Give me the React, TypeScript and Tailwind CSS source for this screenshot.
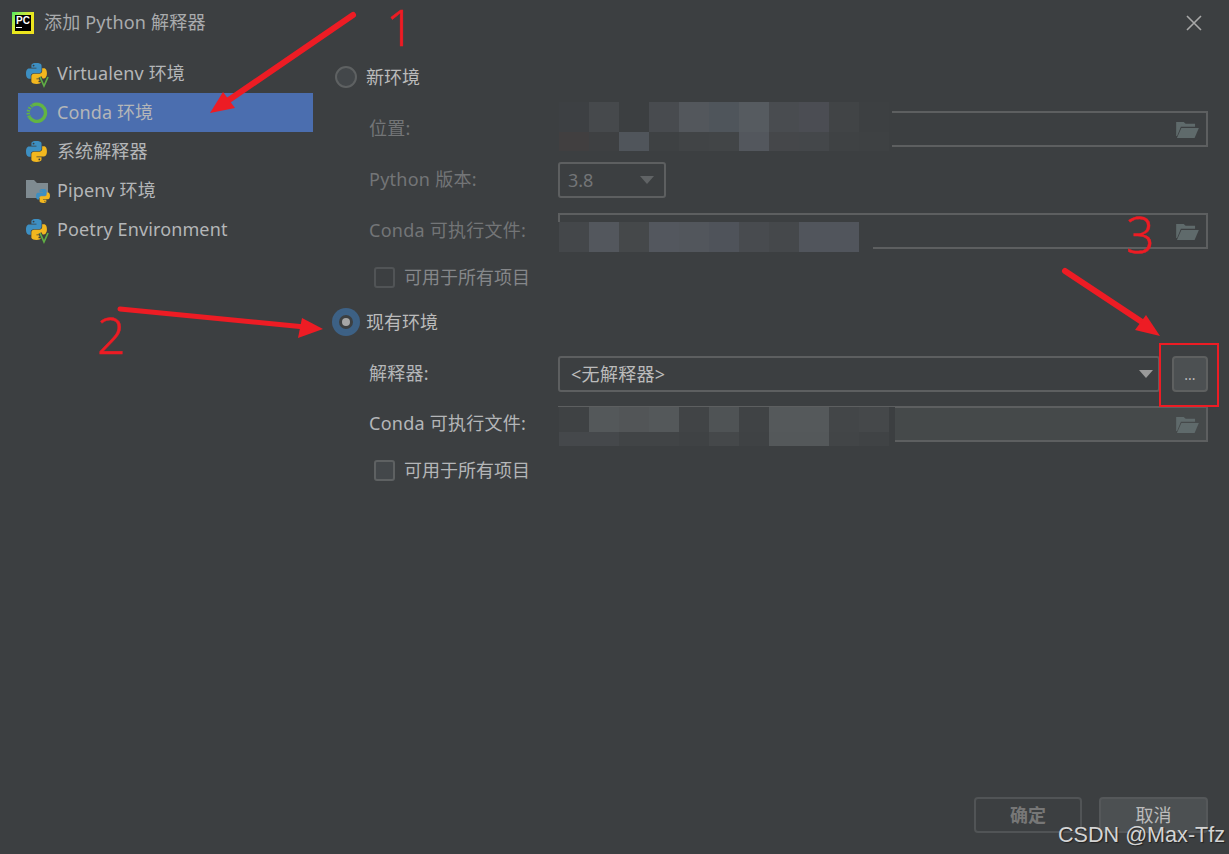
import type { ReactNode } from "react";

const FONT = "font-['Noto_Sans','Noto_Sans_CJK_SC',sans-serif]";

function Python({ className }: { className?: string }) {
  return (
    <svg viewBox="0 0 111 110" className={className}>
      <path
        fill="#3d8fc2"
        fillRule="evenodd"
        d="M54.9 0C26.9 0 28.6 12.1 28.6 12.1l0 12.6h26.7v3.8H18S0 26.4 0 54.8c0 28.3 15.7 27.3 15.7 27.3h9.4V69s-.5-15.7 15.5-15.7h26.6s15 .2 15-14.5V14.5S84.6 0 54.9 0zM40.1 8.5a4.8 4.8 0 1 1 0 9.6 4.8 4.8 0 0 1 0-9.6z"
      />
      <path
        fill="#f2b71f"
        fillRule="evenodd"
        d="M55.7 110c28 0 26.3-12.1 26.3-12.1V85.3H55.3v-3.8h37.3s18 2 18-26.3c0-28.3-15.7-27.3-15.7-27.3h-9.4V41s.5 15.7-15.5 15.7H43.4s-15-.2-15 14.5v24.3S26 110 55.7 110zm14.8-8.5a4.8 4.8 0 1 1 0-9.6 4.8 4.8 0 0 1 0 9.6z"
      />
    </svg>
  );
}

function PythonV() {
  return (
    <div className="relative size-[22px]">
      <Python className="size-[21px]" />
      <svg viewBox="0 0 10 11" className="absolute right-[-1px] bottom-[-2px] h-[11px] w-[10px] overflow-visible">
        <path d="M1 1l4 9 4-9" fill="none" stroke="#3c3f41" strokeWidth="3.4" />
        <path d="M1 1l4 9 4-9" fill="none" stroke="#5fae45" strokeWidth="1.7" />
      </svg>
    </div>
  );
}

function CondaIcon() {
  return (
    <svg viewBox="0 0 22 22" className="size-[22px]">
      <path d="M6.5 3.4A8.6 8.6 0 1 1 3.4 15" fill="none" stroke="#62b543" strokeWidth="3.4" />
      <path
        d="M3.4 15A8.6 8.6 0 0 1 6.5 3.4"
        fill="none"
        stroke="#62b543"
        strokeWidth="3.4"
        strokeDasharray="1.5 1.3"
      />
    </svg>
  );
}

function PipenvIcon() {
  return (
    <div className="relative size-[22px]">
      <svg viewBox="0 0 22 18" className="h-[18px] w-[22px]">
        <path d="M0 0h8l3 3h11v15H0z" fill="#7f8b91" />
      </svg>
      <Python className="absolute right-[-2px] bottom-[-1px] size-[14px]" />
    </div>
  );
}

function FolderIcon() {
  return (
    <svg viewBox="0 0 24 18" className="h-[17px] w-[23px]">
      <path d="M0 1h8l2 2h10v3H5L1 16H0z" fill="#5f6a6b" />
      <path d="M5.5 7.5H24L19.5 18H0.8z" fill="#5f6a6b" />
    </svg>
  );
}

function Caret({ tone }: { tone: string }) {
  return (
    <svg viewBox="0 0 14 8" className={`h-[8px] w-[14px] ${tone}`}>
      <path d="M0 0h14L7 8z" fill="currentColor" />
    </svg>
  );
}

function FormRow({ label, dim, children, className }: { label: string; dim?: boolean; children: ReactNode; className: string }) {
  return (
    <div className={`flex h-[36px] items-center pl-[36px] ${className}`}>
      <span className={`w-[189px] pb-[2px] text-[18px] tracking-[0.25px] ${dim ? "text-[#737577]" : "text-[#b4b6b8]"}`}>
        {label}
      </span>
      {children}
    </div>
  );
}

function Radio({ label, on, className }: { label: string; on?: boolean; className: string }) {
  return (
    <div className={`flex h-[22px] items-center pl-[2px] ${className}`}>
      {on ? (
        <span className="flex size-[22px] items-center justify-center rounded-full border-[4px] border-[#3d6185] bg-[#3c3f41] ring-[3px] ring-[#3d6185]">
          <span className="size-[8px] rounded-full bg-[#a6a6a6]" />
        </span>
      ) : (
        <span className="size-[22px] rounded-full border-2 border-[#5e6162] bg-[#43474a]" />
      )}
      <span className="ml-[9px] text-[18px] text-[#bbbbbb]">{label}</span>
    </div>
  );
}

function Check({ dim, className }: { dim?: boolean; className: string }) {
  return (
    <div className={`flex h-[21px] items-center pl-[41px] ${className}`}>
      <span className={`size-[21px] rounded-[3px] border-2 ${dim ? "border-[#515456]" : "border-[#5e6162] bg-[#43474a]"}`} />
      <span className={`ml-[9px] text-[18px] ${dim ? "text-[#85878a]" : "text-[#b4b6b8]"}`}>可用于所有项目</span>
    </div>
  );
}

// Blurred-out path: rows of 30px cells laid over the start of a field
function Mosaic({ rows, className }: { rows: { h: string; cells: string[] }[]; className: string }) {
  return (
    <div className={`absolute flex flex-col bg-[#3c3f41] pl-[1px] ${className}`}>
      {rows.map((row, i) => (
        <div key={i} className={`flex ${row.h}`}>
          {row.cells.map((c, j) => (
            <div key={j} className={`w-[30px] ${c}`} />
          ))}
        </div>
      ))}
    </div>
  );
}

function PathField({ mosaic, filled }: { mosaic: ReactNode; filled?: boolean }) {
  return (
    <div
      className={`relative flex h-[36px] w-[650px] items-center justify-end border-2 border-[#5d5f60] pr-[7px] ${
        filled ? "bg-[#45494a]" : ""
      }`}
    >
      {mosaic}
      <FolderIcon />
    </div>
  );
}

const rowsA = [
  {
    h: "h-[30px]",
    cells: ["bg-[#3d4043]", "bg-[#46494c]", "bg-[#3c3f41]", "bg-[#484b4f]", "bg-[#53575c]", "bg-[#4f555b]", "bg-[#565b60]", "bg-[#494c50]", "bg-[#4b4d53]", "bg-[#414446]", "bg-[#3d4042]"],
  },
  {
    h: "h-[19px]",
    cells: ["bg-[#413f40]", "bg-[#3e4042]", "bg-[#50555b]", "bg-[#3e4143]", "bg-[#414446]", "bg-[#424547]", "bg-[#53575d]", "bg-[#45474a]", "bg-[#44474a]", "bg-[#3f4244]", "bg-[#3e4143]"],
  },
];

const rowsB = [
  {
    h: "h-[30px]",
    cells: ["bg-[#44474a]", "bg-[#53575d]", "bg-[#45484a]", "bg-[#53575e]", "bg-[#52565c]", "bg-[#4f535a]", "bg-[#484b4f]", "bg-[#45484b]", "bg-[#51555c]", "bg-[#51555c]"],
  },
];

const rowsC = [
  {
    h: "h-[25px]",
    cells: ["bg-[#3f4244]", "bg-[#54585a]", "bg-[#525557]", "bg-[#54585a]", "bg-[#414446]", "bg-[#4f5355]", "bg-[#404345]", "bg-[#55595b]", "bg-[#55595b]", "bg-[#434648]", "bg-[#45484a]"],
  },
  {
    h: "h-[14px]",
    cells: ["bg-[#45484b]", "bg-[#45484b]", "bg-[#414446]", "bg-[#414446]", "bg-[#3f4244]", "bg-[#45484a]", "bg-[#3f4244]", "bg-[#54585a]", "bg-[#54585a]", "bg-[#424547]", "bg-[#404345]"],
  },
];

const navItems: { label: string; icon: ReactNode; active?: boolean }[] = [
  { label: "Virtualenv 环境", icon: <PythonV /> },
  { label: "Conda 环境", icon: <CondaIcon />, active: true },
  { label: "系统解释器", icon: <Python className="size-[21px]" /> },
  { label: "Pipenv 环境", icon: <PipenvIcon /> },
  { label: "Poetry Environment", icon: <PythonV /> },
];

export default function App() {
  return (
    <div className={`relative flex h-[854px] w-[1229px] flex-col overflow-hidden bg-[#3c3f41] ${FONT}`}>
      {/* title bar */}
      <div className="flex h-[45px] shrink-0 items-center pl-[12px] pr-[27px]">
        <div className="flex size-[22px] flex-col bg-gradient-to-br from-[#3bea62] via-[#e8e81c] to-[#f0e020] p-[3px]">
          <div className="flex flex-1 flex-col bg-black px-[1px] pt-[1px]">
            <span className="font-['Liberation_Sans',sans-serif] text-[10px] leading-[10px] font-bold text-white">PC</span>
            <span className="mt-[1px] h-[1px] w-[6px] bg-white" />
          </div>
        </div>
        <span className="ml-[10px] text-[18px] tracking-[0.2px] text-[#a9abad]">添加 Python 解释器</span>
        <svg viewBox="0 0 16 16" className="ml-auto size-[16px]">
          <path d="M1 1l14 14M15 1L1 15" stroke="#a8a8a8" strokeWidth="1.6" />
        </svg>
      </div>

      <div className="flex flex-1">
        {/* left list */}
        <div className="w-[333px] shrink-0 pt-[9px] pl-[18px]">
          <div className="w-[295px]">
            {navItems.map((item) => (
              <div
                key={item.label}
                className={`flex h-[39px] items-center pl-[8px] ${item.active ? "bg-[#4b6eaf]" : ""}`}
              >
                <span className="flex w-[31px]">{item.icon}</span>
                <span className="text-[18px] tracking-[0.12px] text-[#b4b6b8]">{item.label}</span>
              </div>
            ))}
          </div>
        </div>

        {/* form */}
        <div className="flex flex-1 flex-col pt-[21px]">
          <Radio label="新环境" className="" />
          <FormRow label="位置:" dim className="mt-[23px]">
            <PathField mosaic={<Mosaic rows={rowsA} className="top-[-11px] left-[-2px] w-[334px]" />} />
          </FormRow>
          <FormRow label="Python 版本:" dim className="mt-[15px]">
            <div className="flex h-[36px] w-[108px] items-center justify-between rounded-[3px] border-2 border-[#5d5f60] pr-[10px] pl-[8px]">
              <span className="text-[18px] text-[#737577]">3.8</span>
              <Caret tone="text-[#606365]" />
            </div>
          </FormRow>
          <FormRow label="Conda 可执行文件:" dim className="mt-[15px]">
            <PathField mosaic={<Mosaic rows={rowsB} className="top-[7px] left-[-2px] h-[30px] w-[315px]" />} />
          </FormRow>
          <Check dim className="mt-[18px]" />
          <Radio label="现有环境" on className="mt-[23px]" />
          <FormRow label="解释器:" className="mt-[23px]">
            <div className="flex h-[36px] w-[602px] items-center justify-between rounded-[3px] border-2 border-[#5d5f60] pr-[5px] pl-[11px]">
              <span className="text-[18px] tracking-[0.3px] text-[#bbbbbb]">&lt;无解释器&gt;</span>
              <Caret tone="text-[#9a9a9a]" />
            </div>
            <div className="ml-[12px] flex h-[36px] w-[36px] items-center justify-center rounded-[4px] border-2 border-[#5e6060] bg-[#4c5052] text-[14px] text-[#bbbbbb]">
              ...
            </div>
          </FormRow>
          <FormRow label="Conda 可执行文件:" className="mt-[14px]">
            <PathField filled mosaic={<Mosaic rows={rowsC} className="top-[-1px] left-[-2px] w-[337px]" />} />
          </FormRow>
          <Check className="mt-[18px]" />

          {/* footer buttons */}
          <div className="mt-auto flex justify-end gap-[17px] pr-[21px] pb-[21px]">
            <div className="flex h-[36px] w-[108px] items-center justify-center rounded-[4px] border-2 border-[#515456] text-[18px] font-semibold text-[#777777]">
              确定
            </div>
            <div className="flex h-[36px] w-[109px] items-center justify-center rounded-[4px] border-2 border-[#55585a] bg-[#4c5052] text-[18px] text-[#bbbbbb]">
              取消
            </div>
          </div>
        </div>
      </div>

      {/* red annotations drawn over the screenshot */}
      <svg viewBox="0 0 1229 854" className="pointer-events-none absolute inset-0 h-[854px] w-[1229px]">
        <g stroke="#ed1c24" strokeWidth="6" strokeLinecap="round" fill="none">
          <path d="M353 15L226 102" />
          <path d="M120 309L305 327" strokeWidth="5" />
          <path d="M1065 271L1148 326" />
        </g>
        <g fill="#ed1c24">
          <path d="M210 113L223 92L235 108z" />
          <path d="M323 329L302 318L298 338z" />
          <path d="M1160 336L1146 315L1135 330z" />
        </g>
      </svg>
      <div className="absolute top-[343px] left-[1159px] h-[64px] w-[60px] border-2 border-[#ed1c24]" />
      <span className="absolute top-[2px] left-[386px] text-[50px] leading-none font-light text-[#ed1c24] [-webkit-text-stroke:0.4px_#ed1c24]">1</span>
      <span className="absolute top-[310px] left-[97px] text-[50px] leading-none font-light text-[#ed1c24] [-webkit-text-stroke:0.4px_#ed1c24]">2</span>
      <span className="absolute top-[209px] left-[1126px] text-[50px] leading-none font-light text-[#ed1c24] [-webkit-text-stroke:0.4px_#ed1c24]">3</span>

      <span className="absolute top-[822px] left-[1058px] font-['Liberation_Sans',sans-serif] text-[21.6px] leading-[26px] text-[#d4d4d4] [text-shadow:1px_1px_1px_#222]">
        CSDN @Max-Tfz
      </span>
    </div>
  );
}
